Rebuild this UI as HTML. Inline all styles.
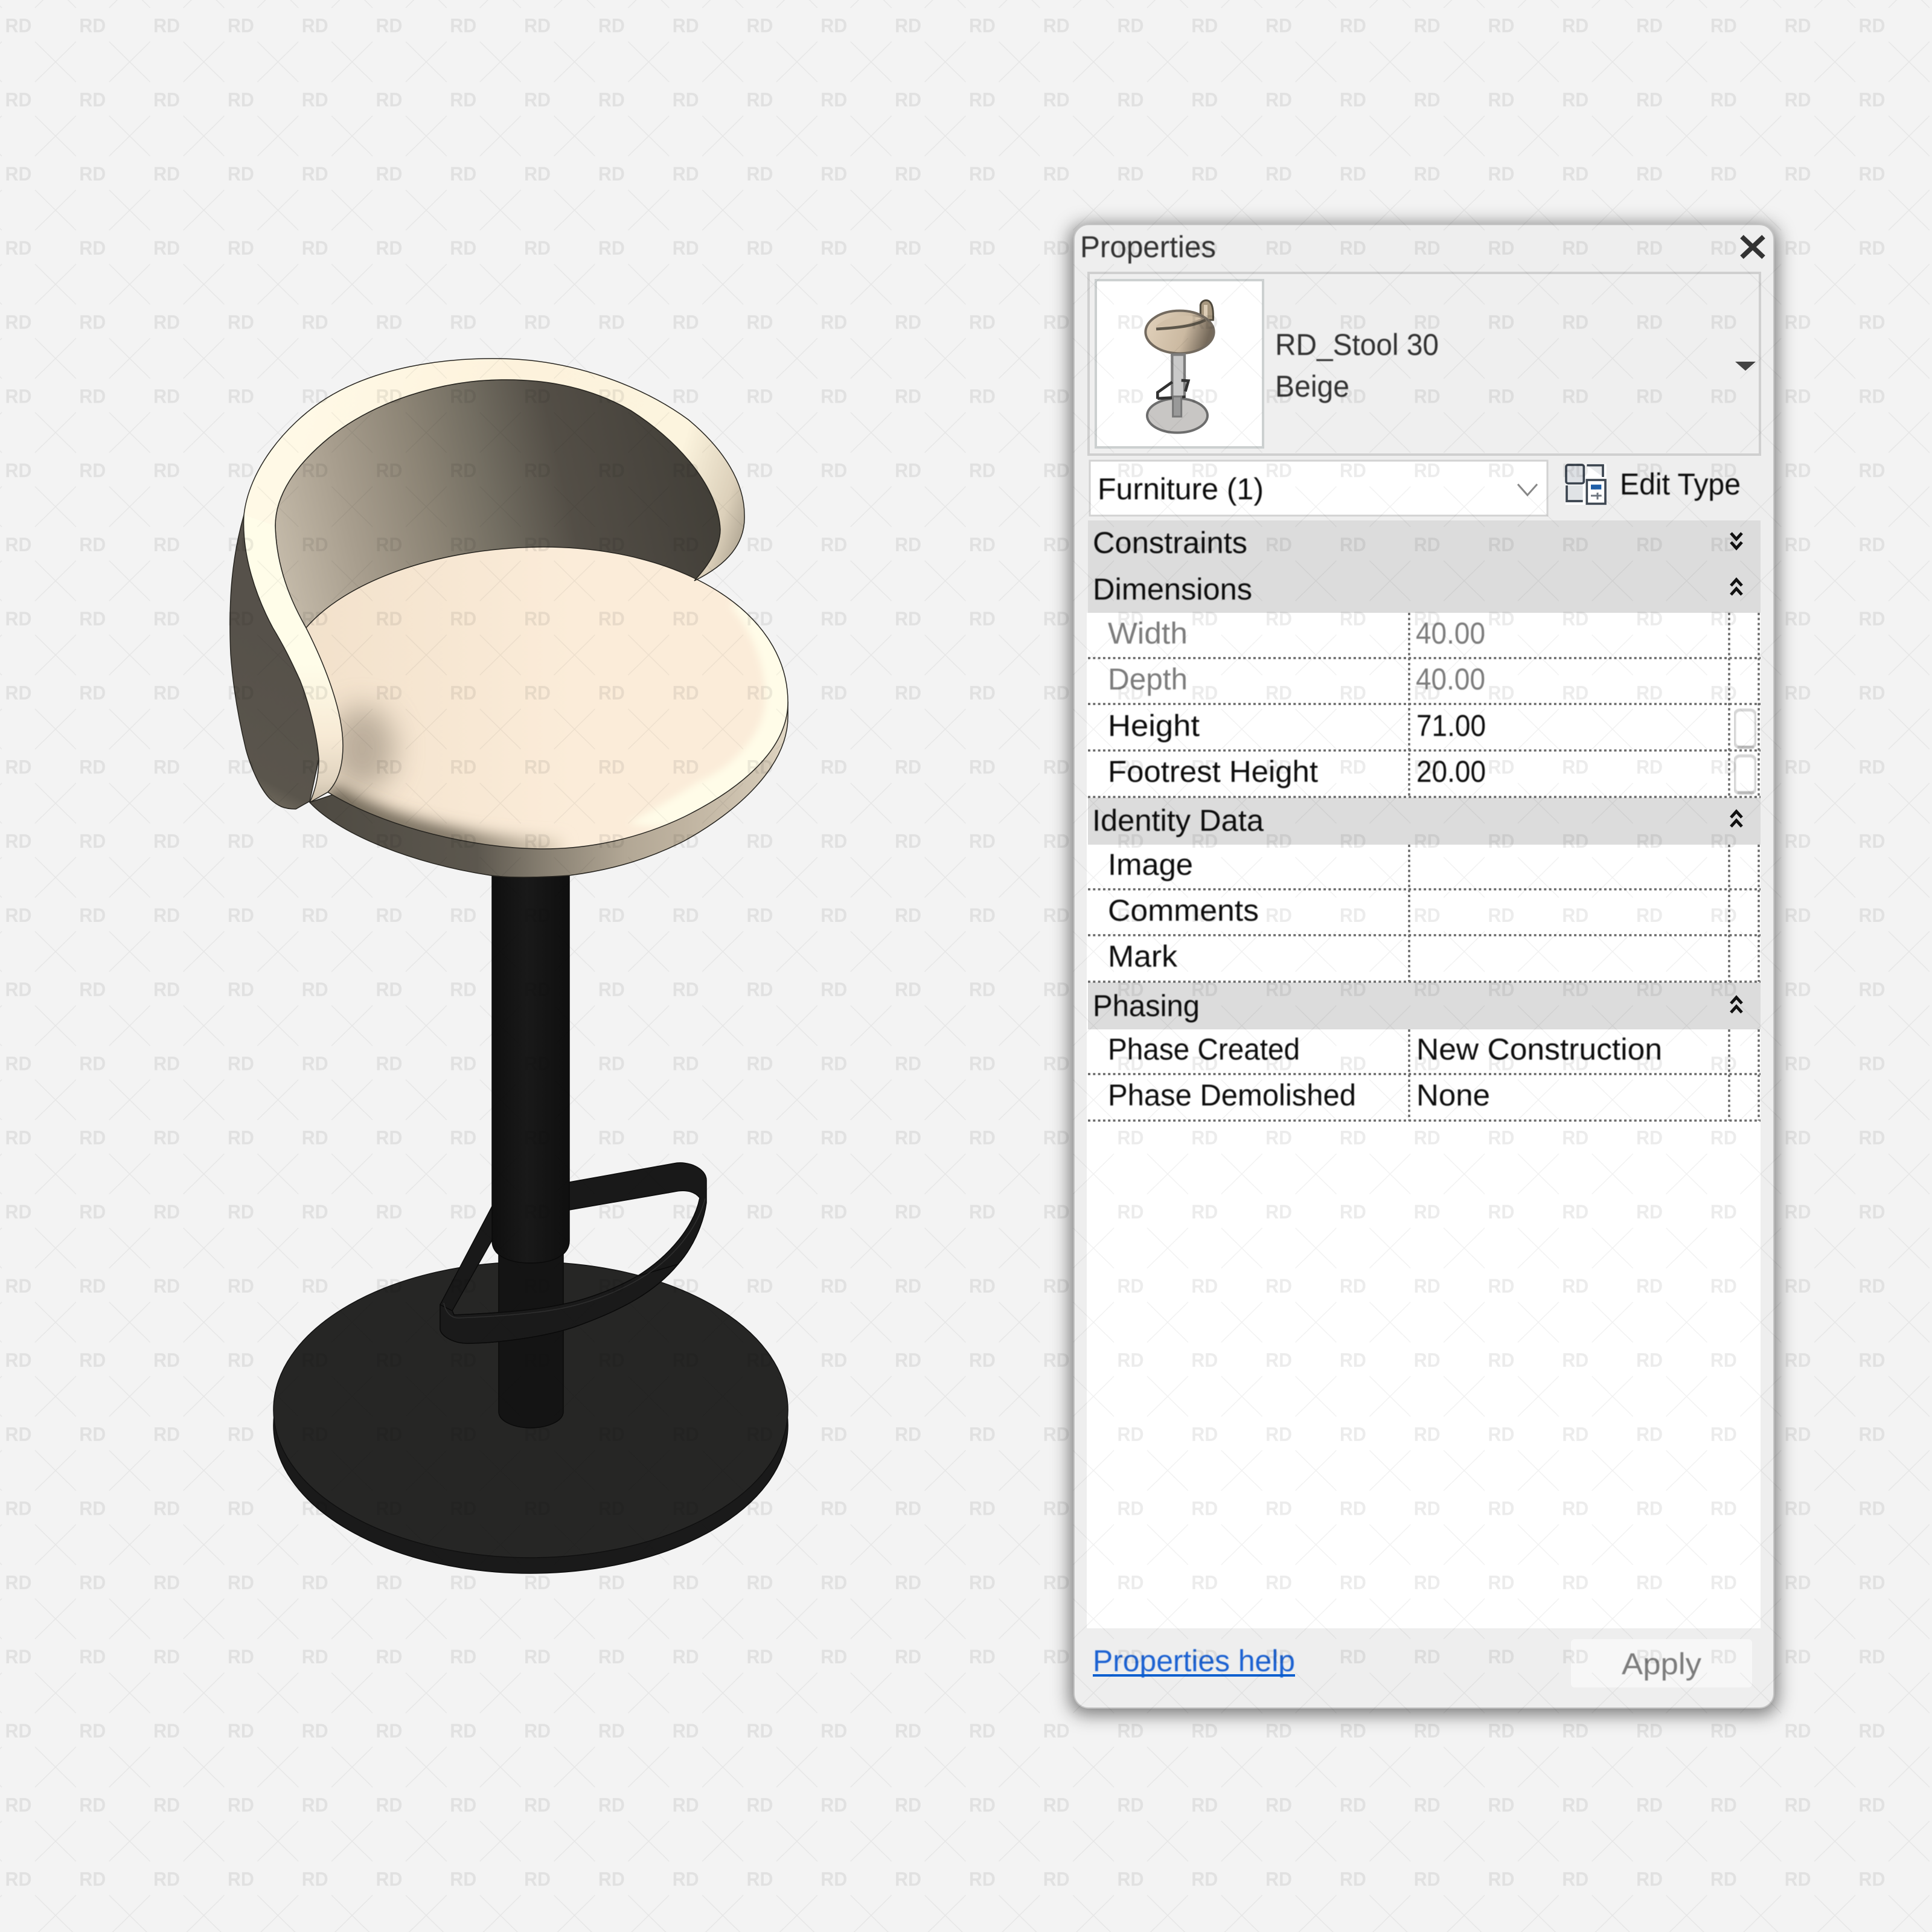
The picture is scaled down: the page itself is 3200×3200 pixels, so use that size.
<!DOCTYPE html>
<html><head><meta charset="utf-8"><title>RD_Stool 30</title>
<style>html,body{margin:0;padding:0;background:#f3f3f3}svg{display:block}text{font-family:"Liberation Sans",sans-serif}</style></head>
<body>
<svg xmlns="http://www.w3.org/2000/svg" width="3200" height="3200" viewBox="0 0 3200 3200">
<defs>
<pattern id="wm" patternUnits="userSpaceOnUse" width="122.8" height="122.8">
  <text x="8.5" y="53.5" font-size="32" font-weight="bold" textLength="44" lengthAdjust="spacingAndGlyphs" fill="#000" fill-opacity=".075">RD</text>
  <g stroke="#000" stroke-opacity=".055" stroke-width="1.4" fill="none">
    <path d="M58,69L126,136M126,69L58,136"/>
    <path d="M58,-54L126,13M126,-54L58,13"/>
    <path d="M-65,69L3,136M3,69L-65,136"/>
    <path d="M-65,-54L3,13M3,-54L-65,13"/>
  </g>
</pattern>
<filter id="sh" filterUnits="userSpaceOnUse" x="1600" y="200" width="1500" height="2800"><feGaussianBlur stdDeviation="15"/></filter>
<filter id="b22" filterUnits="userSpaceOnUse" x="300" y="800" width="1200" height="800"><feGaussianBlur stdDeviation="24"/></filter>
<filter id="b13" filterUnits="userSpaceOnUse" x="300" y="800" width="1200" height="800"><feGaussianBlur stdDeviation="13"/></filter>
<filter id="b6" filterUnits="userSpaceOnUse" x="300" y="800" width="1200" height="800"><feGaussianBlur stdDeviation="6"/></filter>
<filter id="tb" x="-2%" y="-2%" width="104%" height="104%"><feGaussianBlur stdDeviation=".7"/></filter>
<linearGradient id="inner" gradientUnits="userSpaceOnUse" x1="456" y1="950" x2="1193" y2="780">
  <stop offset="0" stop-color="#c6bcab"/><stop offset=".18" stop-color="#a89e8e"/><stop offset=".36" stop-color="#8c8475"/><stop offset=".5" stop-color="#726d61"/><stop offset=".66" stop-color="#534e46"/><stop offset=".85" stop-color="#49453e"/><stop offset="1" stop-color="#413e37"/>
</linearGradient>
<linearGradient id="under" gradientUnits="userSpaceOnUse" x1="512" y1="0" x2="1305" y2="0">
  <stop offset="0" stop-color="#4e4a42"/><stop offset=".35" stop-color="#5c574e"/><stop offset=".49" stop-color="#877f71"/><stop offset=".66" stop-color="#b2a795"/><stop offset=".78" stop-color="#bfb3a0"/><stop offset=".95" stop-color="#d3c8b5"/><stop offset="1" stop-color="#e3d9c6"/>
</linearGradient>
<linearGradient id="shell" gradientUnits="userSpaceOnUse" x1="520" y1="1100" x2="400" y2="1330">
  <stop offset="0" stop-color="#56514a"/><stop offset=".8" stop-color="#5a554c"/><stop offset="1" stop-color="#7b7466"/>
</linearGradient>
<linearGradient id="seatbase" gradientUnits="userSpaceOnUse" x1="500" y1="0" x2="950" y2="0">
  <stop offset="0" stop-color="#f2e1cb"/><stop offset="1" stop-color="#fbecd9"/>
</linearGradient>
<linearGradient id="edgeShade" gradientUnits="userSpaceOnUse" x1="543" y1="0" x2="930" y2="0">
  <stop offset="0" stop-color="#5f5748"/><stop offset=".55" stop-color="#6f6656"/><stop offset="1" stop-color="#e4d5be"/>
</linearGradient>
<linearGradient id="rim" gradientUnits="userSpaceOnUse" x1="500" y1="700" x2="1230" y2="930">
  <stop offset="0" stop-color="#fff9e6"/><stop offset=".4" stop-color="#fdf2dc"/><stop offset=".8" stop-color="#fcf4de"/><stop offset=".93" stop-color="#dcd0ba"/><stop offset="1" stop-color="#a89e8c"/>
</linearGradient>
<linearGradient id="rimL" gradientUnits="userSpaceOnUse" x1="0" y1="1100" x2="0" y2="1330">
  <stop offset="0" stop-color="#fffde9"/><stop offset=".52" stop-color="#f7ead5"/><stop offset=".85" stop-color="#e0d3bf"/><stop offset="1" stop-color="#c5b9a6"/>
</linearGradient>
<linearGradient id="pole" gradientUnits="userSpaceOnUse" x1="815" y1="0" x2="943" y2="0">
  <stop offset="0" stop-color="#0f0f0f"/><stop offset=".45" stop-color="#191919"/><stop offset="1" stop-color="#0f0f0f"/>
</linearGradient>
<linearGradient id="thumb" x1="0" y1="0" x2="1" y2="0.2">
  <stop offset="0" stop-color="#e2d2bc"/><stop offset=".65" stop-color="#cbb9a1"/><stop offset="1" stop-color="#75695a"/>
</linearGradient>
<clipPath id="seatClip"><path d="M506,1041C570,965 720,907 900,906C1130,906 1305,1015 1305,1163C1305,1240 1230,1305 1133,1353C1060,1388 980,1406 900,1406C790,1406 640,1372 543,1312L568,1235Z"/></clipPath>
<g id="up" fill="none" stroke="#111" stroke-width="5"><path d="M-9,-3L0,-13L9,-3"/><path d="M-9,12L0,2L9,12"/></g>
<g id="dn" fill="none" stroke="#111" stroke-width="5"><path d="M-9,-13L0,-3L9,-13"/><path d="M-9,2L0,12L9,2"/></g>
</defs>

<rect width="3200" height="3200" fill="#f3f3f3"/>

<!-- base -->
<rect x="453" y="2335" width="852" height="26" fill="#1a1a1a"/>
<ellipse cx="879" cy="2361" rx="426" ry="245" fill="#1a1a1a" stroke="#0c0c0c" stroke-width="1.5"/>
<ellipse cx="879" cy="2335" rx="426" ry="245" fill="#262625" stroke="#101010" stroke-width="1.5"/>

<!-- footrest back -->
<path fill-rule="evenodd" fill="#191919" stroke="#0a0a0a" stroke-width="1.5" d="M943,1958L1116,1927C1140,1922 1170,1935 1170,1955L1170,1992C1165,2030 1145,2070 1123,2094C1085,2140 1030,2170 951,2198C900,2215 820,2225 774,2225C750,2225 729,2212 729,2201L729,2161L815,1998ZM943,2004L1116,1974C1135,1970 1150,1973 1159,1984C1150,2030 1110,2080 1055,2114C1010,2140 960,2155 933,2160C880,2172 800,2176 752,2178L749,2171L815,2054Z"/>

<!-- pole -->
<path d="M826,2060L933,2060L933,2338C933,2355 905,2365 879,2365C853,2365 826,2355 826,2338Z" fill="#141414" stroke="#0a0a0a" stroke-width="1.5"/>
<path d="M815,1440L943,1440L943,2055C943,2080 915,2092 879,2092C843,2092 815,2080 815,2055Z" fill="url(#pole)" stroke="#0a0a0a" stroke-width="1.5"/>

<!-- footrest front -->
<path fill="#1a1a1a" stroke="#0a0a0a" stroke-width="1.5" d="M729,2161L749,2171L752,2178C800,2176 880,2172 933,2160C960,2155 1010,2140 1055,2114L1123,2094C1085,2140 1030,2170 951,2198C900,2215 820,2225 774,2225C750,2225 729,2212 729,2201Z"/>
<path fill="none" stroke="#2e2e2e" stroke-width="1.5" d="M735,2158C738,2172 745,2183 760,2183C810,2181 885,2177 935,2166C965,2160 1015,2145 1060,2118C1115,2085 1155,2035 1168,1985"/>

<!-- stool shell -->
<path d="M404,853C385,920 378,990 382,1083C386,1140 395,1190 407,1240C415,1270 430,1305 447,1323C460,1335 470,1340 490,1340L513,1327L528,1257L500,1000Z" fill="url(#shell)" stroke="#26241f" stroke-width="1.5"/>
<path d="M1150,962C1175,935 1193,905 1193,877C1190,810 1130,735 1045,680C975,640 900,628 831,629C730,630 620,665 545,725C490,770 456,820 456,871C458,950 490,1010 506,1041L800,1100Z" fill="url(#inner)" stroke="#26241f" stroke-width="1.5"/>
<path d="M513,1329C560,1380 680,1430 813,1450C850,1455 900,1453 943,1450C1020,1440 1080,1420 1133,1393C1220,1345 1305,1270 1305,1187L1305,1163L900,1200Z" fill="url(#under)" stroke="#26241f" stroke-width="1.5"/>

<!-- seat -->
<path d="M506,1041C570,965 720,907 900,906C1130,906 1305,1015 1305,1163C1305,1240 1230,1305 1133,1353C1060,1388 980,1406 900,1406C790,1406 640,1372 543,1312L568,1235Z" fill="url(#seatbase)"/>
<g clip-path="url(#seatClip)">
  <ellipse cx="600" cy="1240" rx="55" ry="70" fill="#8d8272" opacity=".55" filter="url(#b22)"/>
  <path d="M543,1312C640,1372 790,1406 930,1408" fill="none" stroke="url(#edgeShade)" stroke-width="32" filter="url(#b13)"/>
  <path d="M1207,1000C1250,1050 1270,1110 1267,1167C1262,1220 1210,1270 1167,1290C1130,1310 1080,1345 1040,1363C1080,1372 1120,1372 1140,1360L1330,1300L1330,1000Z" fill="#fffce8" filter="url(#b6)"/>
</g>
<path d="M506,1041C570,965 720,907 900,906C1130,906 1305,1015 1305,1163C1305,1240 1230,1305 1133,1353C1060,1388 980,1406 900,1406C790,1406 640,1372 543,1312" fill="none" stroke="#26241f" stroke-width="1.5"/>

<!-- rim -->
<path d="M404,853C412,780 470,705 540,660C620,610 730,592 831,594C950,596 1065,640 1140,695C1200,745 1233,800 1233,853C1235,900 1205,935 1150,962C1175,935 1193,905 1193,877C1190,810 1130,735 1045,680C975,640 900,628 831,629C730,630 620,665 545,725C490,770 456,820 456,871Z" fill="url(#rim)"/>
<path d="M404,853L456,871C458,950 490,1010 507,1040C530,1085 568,1170 568,1235C568,1270 560,1295 543,1312L513,1329C522,1310 528,1285 528,1257C525,1215 510,1160 497,1127C480,1090 470,1070 452,1040C425,990 400,920 404,853Z" fill="url(#rimL)"/>
<path fill="none" stroke="#26241f" stroke-width="1.5" d="M513,1329C522,1310 528,1285 528,1257C525,1215 510,1160 497,1127C480,1090 470,1070 452,1040C425,990 400,920 404,853C412,780 470,705 540,660C620,610 730,592 831,594C950,596 1065,640 1140,695C1200,745 1233,800 1233,853C1235,900 1205,935 1150,962C1175,935 1193,905 1193,877C1190,810 1130,735 1045,680C975,640 900,628 831,629C730,630 620,665 545,725C490,770 456,820 456,871C458,950 490,1010 507,1040C530,1085 568,1170 568,1235C568,1270 560,1295 543,1312L513,1329"/>

<!-- panel -->
<rect x="1772" y="372" width="1172" height="2468" rx="26" fill="#000" fill-opacity=".5" filter="url(#sh)"/>
<rect x="1779" y="372" width="1159" height="2457" rx="24" fill="#eeeeee" stroke="#c4c4c4" stroke-width="2"/>

<!-- type box -->
<rect x="1803" y="452" width="1112" height="301" fill="#efefef" stroke="#cfcfcf" stroke-width="4"/>
<rect x="1815" y="464" width="277" height="277" fill="#fff" stroke="#ccd0d0" stroke-width="4"/>

<!-- thumb -->
<g transform="translate(1800,450) scale(.33333)" filter="url(#tb)">
  <path d="M565,240L565,165C570,145 590,138 605,145C622,155 630,180 628,240Z" fill="#a89880" stroke="#4f483c" stroke-width="9"/>
  <rect x="582" y="165" width="18" height="70" fill="#ddcdb6"/>
  <ellipse cx="462" cy="300" rx="170" ry="106" fill="url(#thumb)" stroke="#736b5f" stroke-width="12"/>
  <path d="M345,285C420,280 520,275 590,240" fill="none" stroke="#5c5548" stroke-width="14"/>
  <path d="M345,270C400,220 500,205 570,232L500,258L345,275Z" fill="#d2c0a8"/>
  <ellipse cx="450" cy="715" rx="150" ry="85" fill="#c8c6c4" stroke="#6d6d6d" stroke-width="12"/>
  <rect x="424" y="412" width="62" height="215" fill="#c9c9c9" stroke="#7d7d7d" stroke-width="13"/>
  <path d="M352,632L352,600L425,548M470,540L505,542L490,595M352,630L490,622" fill="none" stroke="#333" stroke-width="14"/>
  <rect x="428" y="620" width="42" height="100" fill="#999" stroke="#777" stroke-width="9"/>
</g>

<g filter="url(#tb)" font-size="50">
  <text x="1789" y="426" textLength="225" lengthAdjust="spacingAndGlyphs" fill="#333">Properties</text>
  <text x="2112" y="588" textLength="271" lengthAdjust="spacingAndGlyphs" fill="#333">RD_Stool 30</text>
  <text x="2112" y="657" textLength="123" lengthAdjust="spacingAndGlyphs" fill="#333">Beige</text>
</g>

<!-- close -->
<path d="M2885,392L2921,426M2921,392L2885,426" stroke="#333" stroke-width="8" fill="none"/>
<!-- dropdown tri -->
<path d="M2874,599L2908,599L2891,614Z" fill="#444"/>

<!-- category -->
<rect x="1805" y="763" width="758" height="91" fill="#fff" stroke="#d2d2d2" stroke-width="3"/>
<path d="M2514,802L2530,820L2546,802" fill="none" stroke="#888" stroke-width="3"/>

<!-- edit type icon -->
<g transform="translate(2560,740) scale(.33333)">
  <rect x="98" y="85" width="204" height="203" fill="#fff"/>
  <rect x="102" y="90" width="88" height="92" rx="10" fill="#dde0e4" stroke="#3c4550" stroke-width="11"/>
  <path d="M205,92L285,92L285,150" fill="#e8eaec" stroke="#3c4550" stroke-width="11"/>
  <path d="M105,192L105,270L185,270L185,192Z" fill="#e0e3e6"/>
  <path d="M105,192L105,270L185,270" fill="none" stroke="#3c4550" stroke-width="11"/>
  <rect x="205" y="165" width="92" height="118" fill="#fff" stroke="#3f4853" stroke-width="11"/>
  <rect x="225" y="188" width="52" height="24" fill="#1f5fa8"/>
  <path d="M225,243H278M258,228V262" stroke="#6f7780" stroke-width="9" fill="none"/>
</g>

<!-- sections -->
<rect x="1802" y="862" width="1114" height="153" fill="#dcdcdc"/>
<rect x="1800" y="1015" width="1116" height="1682" fill="#fff"/>
<rect x="1802" y="1321" width="1114" height="78" fill="#dcdcdc"/>
<rect x="1802" y="1627" width="1114" height="78" fill="#dcdcdc"/>

<!-- dotted grid -->
<g stroke="#6a6a6a" stroke-width="3.5" stroke-dasharray="4 4.3" fill="none">
  <path d="M1802,1090H2916M1802,1166H2916M1802,1243H2916M1802,1320H2916M1802,1473H2916M1802,1549H2916M1802,1626H2916M1802,1779H2916M1802,1856H2916"/>
  <path d="M2334,1015V1320M2864,1015V1320M2913,1015V1320M2334,1399V1626M2864,1399V1626M2913,1399V1626M2334,1705V1856M2864,1705V1856M2913,1705V1856"/>
</g>

<!-- spin buttons -->
<g fill="#fff" stroke="#d6d6d6" stroke-width="5" filter="url(#tb)">
  <rect x="2873" y="1176" width="35" height="62" rx="9"/>
  <rect x="2873" y="1252" width="35" height="62" rx="9"/>
</g>
<path d="M2878,1237L2905,1237M2878,1313L2905,1313" stroke="#b8b8b8" stroke-width="5" filter="url(#tb)"/>

<!-- chevrons -->
<use href="#dn" x="2876" y="896"/>
<use href="#up" x="2876" y="973"/>
<use href="#up" x="2876" y="1357"/>
<use href="#up" x="2876" y="1665"/>

<g filter="url(#tb)" font-size="50" fill="#111">
  <text x="1818" y="827" textLength="275" lengthAdjust="spacingAndGlyphs">Furniture (1)</text>
  <text x="2683" y="819" textLength="200" lengthAdjust="spacingAndGlyphs">Edit Type</text>
  <text x="1810" y="916" textLength="256" lengthAdjust="spacingAndGlyphs">Constraints</text>
  <text x="1810" y="993" textLength="264" lengthAdjust="spacingAndGlyphs">Dimensions</text>
  <text x="1835" y="1066" textLength="132" lengthAdjust="spacingAndGlyphs" fill="#7d7d7d">Width</text>
  <text x="2345" y="1066" textLength="115" lengthAdjust="spacingAndGlyphs" fill="#7d7d7d">40.00</text>
  <text x="1835" y="1142" textLength="132" lengthAdjust="spacingAndGlyphs" fill="#7d7d7d">Depth</text>
  <text x="2345" y="1142" textLength="115" lengthAdjust="spacingAndGlyphs" fill="#7d7d7d">40.00</text>
  <text x="1835" y="1219" textLength="152" lengthAdjust="spacingAndGlyphs">Height</text>
  <text x="2346" y="1219" textLength="115" lengthAdjust="spacingAndGlyphs">71.00</text>
  <text x="1835" y="1295" textLength="348" lengthAdjust="spacingAndGlyphs">Footrest Height</text>
  <text x="2346" y="1295" textLength="115" lengthAdjust="spacingAndGlyphs">20.00</text>
  <text x="1809" y="1376" textLength="284" lengthAdjust="spacingAndGlyphs">Identity Data</text>
  <text x="1835" y="1449" textLength="141" lengthAdjust="spacingAndGlyphs">Image</text>
  <text x="1835" y="1525" textLength="250" lengthAdjust="spacingAndGlyphs">Comments</text>
  <text x="1835" y="1601" textLength="115" lengthAdjust="spacingAndGlyphs">Mark</text>
  <text x="1810" y="1683" textLength="177" lengthAdjust="spacingAndGlyphs">Phasing</text>
  <text x="1835" y="1755" textLength="318" lengthAdjust="spacingAndGlyphs">Phase Created</text>
  <text x="2346" y="1755" textLength="407" lengthAdjust="spacingAndGlyphs">New Construction</text>
  <text x="1835" y="1831" textLength="411" lengthAdjust="spacingAndGlyphs">Phase Demolished</text>
  <text x="2346" y="1831" textLength="122" lengthAdjust="spacingAndGlyphs">None</text>
</g>

<!-- footer -->
<rect x="2602" y="2715" width="300" height="80" rx="6" fill="#f7f7f7"/>
<g filter="url(#tb)" font-size="50">
  <text x="1810" y="2768" textLength="335" lengthAdjust="spacingAndGlyphs" fill="#1a62d2">Properties help</text>
  <text x="2686" y="2773" textLength="132" lengthAdjust="spacingAndGlyphs" fill="#7c7c7c">Apply</text>
</g>
<rect x="1810" y="2773" width="335" height="4" fill="#0a5fcf"/>

<!-- watermark overlay -->
<rect width="3200" height="3200" fill="url(#wm)"/>
</svg>
</body></html>
